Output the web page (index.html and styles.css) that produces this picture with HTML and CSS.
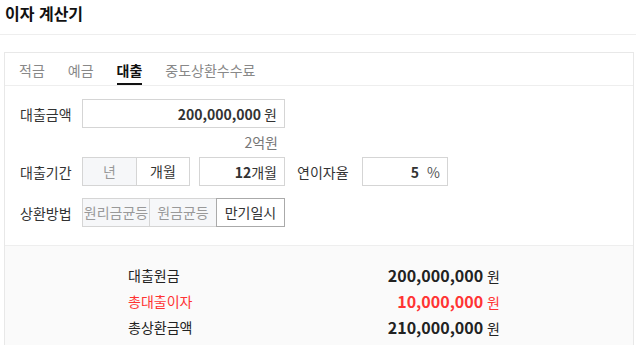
FILE: index.html
```html
<!DOCTYPE html>
<html lang="ko">
<head>
<meta charset="utf-8">
<title>이자 계산기</title>
<link rel="stylesheet" href="styles.css">
</head>
<body>
<div class="header">이자 계산기</div>
<div class="card">
	<div class="tabs">
		<div class="tab">적금</div>
		<div class="tab">예금</div>
		<div class="tab on">대출</div>
		<div class="tab">중도상환수수료</div>
	</div>
	<div class="form">
		<div class="row">
			<div class="label">대출금액</div>
			<div class="field wide"><b>200,000,000</b><span class="unit">원</span></div>
		</div>
		<div class="hint">2억원</div>
		<div class="row">
			<div class="label">대출기간</div>
			<div class="seg">
				<div class="opt off w54">년</div>
				<div class="opt w53">개월</div>
			</div>
			<div class="field mid"><b>12</b>개월</div>
			<div class="label2">연이자율</div>
			<div class="field mid"><b>5</b><span class="unit pct">%</span></div>
		</div>
		<div class="row r3">
			<div class="label">상환방법</div>
			<div class="seg">
				<div class="opt off w67">원리금균등</div>
				<div class="opt off w67">원금균등</div>
				<div class="opt sel w68">만기일시</div>
			</div>
		</div>
	</div>
	<div class="result">
		<div class="line"><span>대출원금</span><span><b>200,000,000</b> 원</span></div>
		<div class="line red"><span>총대출이자</span><span><b>10,000,000</b> 원</span></div>
		<div class="line"><span>총상환금액</span><span><b>210,000,000</b> 원</span></div>
	</div>
</div>
</body>
</html>
```

FILE: styles.css
```css
body {
	margin: 0;
	font-family: "Noto Sans CJK KR", "Noto Sans", sans-serif;
	font-size: 14px;
	color: #333;
	background: #fff;
}
.header {
	height: 34px;
	line-height: 26px;
	padding-left: 5px;
	font-size: 16px;
	font-weight: bold;
	color: #111;
	border-bottom: 1px solid #eee;
}
.card {
	margin: 17px 0 0 4px;
	width: 628px;
	border: 1px solid #e8e8e8;
	border-bottom: none;
}
.tabs {
	display: flex;
	gap: 23px;
	padding-left: 14px;
	height: 32px;
	border-bottom: 1px solid #eee;
}
.tab {
	line-height: 34px;
	color: #888;
}
.tab.on {
	color: #111;
	font-weight: bold;
	border-bottom: 2px solid #111;
}
.form {
	padding: 13px 0 18px 15px;
}
.row {
	display: flex;
	align-items: center;
	height: 29px;
}
.row.r3 { margin-top: 12px; }
.label {
	width: 62px;
}
.label2 {
	width: 65px;
	margin-left: 12px;
}
.field {
	box-sizing: border-box;
	height: 29px;
	border: 1px solid #d5d5d5;
	display: flex;
	align-items: center;
	justify-content: flex-end;
	padding-right: 7px;
}
.field b {
	font-size: 14px;
	color: #333;
}
.field.wide { width: 203px; }
.field.mid { width: 86px; }
.seg + .field { margin-left: 9px; }
.unit { margin-left: 3px; }
.unit.pct { margin-left: 8px; color: #555; }
.hint {
	width: 258px;
	text-align: right;
	color: #777;
	line-height: 29px;
}
.seg {
	display: flex;
}
.opt {
	box-sizing: border-box;
	height: 29px;
	line-height: 27px;
	text-align: center;
	border: 1px solid #d5d5d5;
	margin-left: -1px;
	background: #fff;
}
.opt:first-child { margin-left: 0; }
.opt.off {
	background: #f6f7f9;
	color: #999;
}
.opt.sel {
	border-color: #aaa;
	position: relative;
}
.w54 { width: 55px; }
.w53 { width: 54px; }
.w67 { width: 68px; }
.w68 { width: 69px; }
.result {
	background: #fafafa;
	border-top: 1px solid #eee;
	padding: 17px 0 0 123px;
	height: 83px;
}
.line {
	width: 372px;
	display: flex;
	justify-content: space-between;
	line-height: 25px;
	color: #222;
}
.line b {
	font-size: 16px;
	color: #222;
}
.line.red, .line.red b {
	color: #f33;
}
```
